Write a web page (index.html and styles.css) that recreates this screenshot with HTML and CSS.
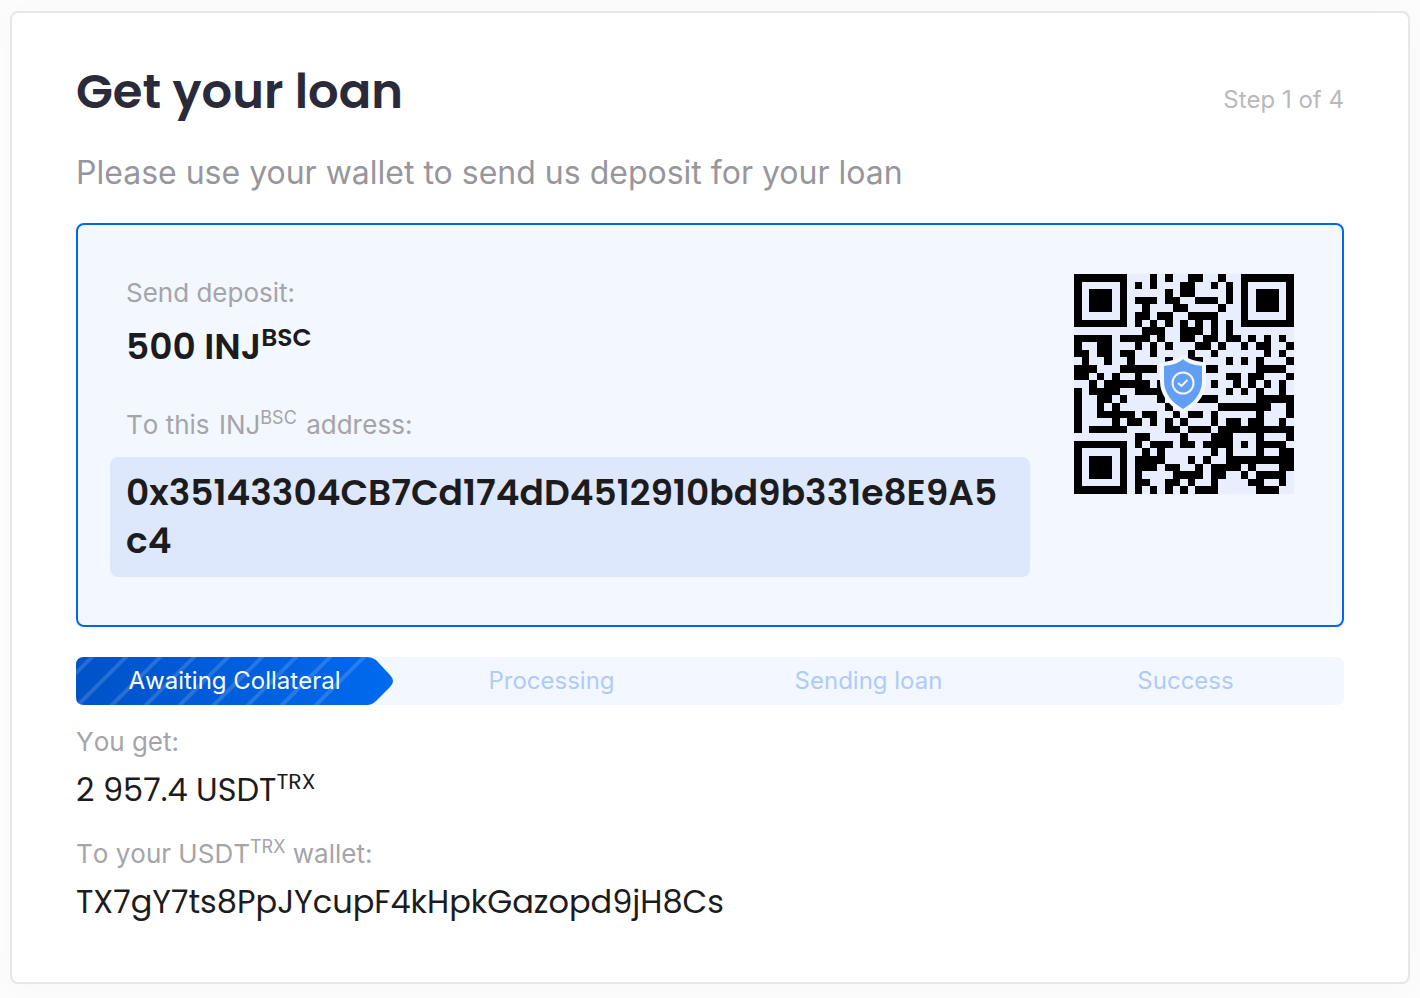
FILE: index.html
```html
<!DOCTYPE html>
<html lang="en">
<head>
    <meta charset="UTF-8">
    <meta name="viewport" content="width=device-width, initial-scale=1.0">
    <title>Get your loan</title>
    <link rel="stylesheet" href="styles.css">
</head>
<body>

    <main class="card">
        <header class="card-header">
            <h1>Get your loan</h1>
            <span class="step">Step 1 of 4</span>
        </header>
        <p class="subtitle">Please use your wallet to send us deposit for your loan</p>

        <section class="deposit">
            <div class="deposit-info">
                <p class="label">Send deposit:</p>
                <p class="amount">500 INJ<sup>BSC</sup></p>
                <p class="label">To this <span class="coin">INJ<sup>BSC</sup></span> address:</p>
                <p class="address">0x35143304CB7Cd174dD4512910bd9b331e8E9A5c4</p>
            </div>
            <div class="qr">
                <svg id="qr-code" class="qr-code" viewBox="0 0 29 29" shape-rendering="crispEdges" role="img" aria-label="Deposit address QR code"></svg>
                <svg class="shield" viewBox="0 0 48 60">
                    <path d="M24 5C29 10 36 11 43 12V27C43 40 34 49 24 55C14 49 5 40 5 27V12C12 11 19 10 24 5Z" fill="#629ff4" stroke="#f3f7ff" stroke-width="8" stroke-linejoin="round" paint-order="stroke"/>
                    <circle cx="24" cy="29" r="10.5" fill="none" stroke="#f3f7ff" stroke-width="2"/>
                    <path d="M19 29L22.500 32L28.500 26" fill="none" stroke="#f3f7ff" stroke-width="2"/>
                </svg>
            </div>
        </section>

        <ol class="progress">
            <li class="active">
                <svg class="arrow" viewBox="0 0 317 48" preserveAspectRatio="none">
                    <defs>
                        <linearGradient id="arrow-fill" x1="0" y1="0" x2="1" y2="0">
                            <stop offset="0" stop-color="#0052c7"/>
                            <stop offset="1" stop-color="#006af0"/>
                        </linearGradient>
                        <clipPath id="arrow-clip">
                            <path d="M8 0H291Q296 0 300 3L314 18Q320 24 314 30L300 44Q296 48 291 48H8Q0 48 0 40V8Q0 0 8 0Z"/>
                        </clipPath>
                    </defs>
                    <g clip-path="url(#arrow-clip)">
                        <rect width="317" height="48" fill="url(#arrow-fill)"/>
                        <path d="M-32 48L16 0M2 48L50 0M36 48L84 0M70 48L118 0M104 48L152 0M138 48L186 0M172 48L220 0M206 48L254 0M240 48L288 0" stroke="#fff" stroke-opacity=".15" stroke-width="4" stroke-linecap="square"/>
                    </g>
                </svg>
                <span>Awaiting Collateral</span>
            </li>
            <li>Processing</li>
            <li>Sending loan</li>
            <li>Success</li>
        </ol>

        <section class="payout">
            <p class="label">You get:</p>
            <p class="value">2 957.4 USDT<sup>TRX</sup></p>
            <p class="label">To your USDT<sup>TRX</sup> wallet:</p>
            <p class="value">TX7gY7ts8PpJYcupF4kHpkGazopd9jH8Cs</p>
        </section>
    </main>

    <script>
        const rows = [
            "#######...#.#..##..#..#######",
            "#.....#.#.#...##..#.#.#.....#",
            "#.###.#.....#.##....#.#.###.#",
            "#.###.#.###.##..###.#.#.###.#",
            "#.###.#..#...##....#..#.###.#",
            "#.....#.##.##..####...#.....#",
            "#######.#.#.#.#.#.#.#.#######",
            ".........###..###.#.#........",
            "#####.####.#..##.##.##.#.#.#.",
            "#..##...#.#.#...##.#..#.##..#",
            "##.##.##..#....#..#......#.#.",
            ".#..#..#....#..##...#.#.#...#",
            "###...#####......##.....####.",
            "##.#.#..#...........##.##...#",
            "..#.######.#......#..#.#.#.#.",
            "#.####..####........#.#.#..#.",
            "#..##.#....#....###.....#####",
            "#..#.#......#......#######..#",
            "#..#####.##..#.##.#.....#...#",
            "#....#.##.#.#.#...#.##.##..#.",
            "#.#####.....##.###.##########",
            "........##....#...###...#...#",
            "#######.#.###.##.####.#.####.",
            "#.....#..#.#......#.#...#..##",
            "#.###.#.####...#.#..#########",
            "#.###.#.###.##..#.####.#...##",
            "#.###.#.#....####.##..#.####.",
            "#.....#.##..##.#..#....##..#.",
            "#######.#.#.#.#.###.....###.."
        ];
        let d = "";
        rows.forEach((row, y) => {
            [...row].forEach((cell, x) => {
                if (cell === "#") {
                    d += `M${x} ${y}h1v1h-1z`;
                }
            });
        });
        const path = document.createElementNS("http://www.w3.org/2000/svg", "path");
        path.setAttribute("d", d);
        document.getElementById("qr-code").appendChild(path);
    </script>
</body>
</html>
```
FILE: styles.css
```css
* {
    box-sizing: border-box;
}
body {
    margin: 0;
    padding: 11px 10px 14px;
    background: #fcfcfc;
    font-family: Inter, "Liberation Sans", sans-serif;
    color: #1c1c1e;
}
h1, p, ol {
    margin: 0;
}
sup {
    line-height: 0;
}
.card {
    padding: 47px 64px 36px;
    background: #fff;
    border: 2px solid #e7e7e7;
    border-radius: 8px;
    box-shadow: 0 4px 40px rgba(0, 0, 0, 0.02);
}
.card-header {
    display: flex;
    justify-content: space-between;
    align-items: baseline;
}
h1 {
    font-family: Poppins, Inter, sans-serif;
    font-size: 48px;
    font-weight: 600;
    line-height: 64px;
    color: #2b2a3a;
}
.step {
    font-size: 24px;
    font-kerning: none;
    color: #b9b9bd;
}
.subtitle {
    margin-top: 25px;
    font-size: 32px;
    line-height: 48px;
    color: #97969c;
}
.deposit {
    display: flex;
    justify-content: space-between;
    margin-top: 26px;
    padding: 48px 48px 48px 32px;
    background: #f3f7ff;
    border: 2px solid #0067ee;
    border-radius: 8px;
}
.deposit-info {
    width: 920px;
}
.label {
    font-size: 26px;
    font-kerning: none;
    line-height: 40px;
    color: #a5a4a9;
}
.label sup {
    font-size: 18px;
}
.deposit .label,
.amount {
    padding-left: 16px;
}
.amount {
    margin-bottom: 24px;
    font-family: Poppins, Inter, sans-serif;
    font-size: 36px;
    font-weight: 600;
    line-height: 68px;
}
.amount sup {
    font-size: 25px;
}
.coin {
    margin: 0 2px;
}
.address {
    margin-top: 12px;
    padding: 12px 16px;
    background: #dee8fc;
    border-radius: 8px;
    font-family: Poppins, Inter, sans-serif;
    font-size: 36px;
    font-weight: 600;
    line-height: 48px;
    word-break: break-all;
}
.qr {
    position: relative;
    width: 220px;
    height: 220px;
    margin-top: 1px;
    background: #e9eeff;
}
.qr-code {
    display: block;
    width: 100%;
    height: 100%;
}
.shield {
    position: absolute;
    top: 80px;
    left: 85px;
    width: 48px;
    height: 60px;
}
.progress {
    display: grid;
    grid-template-columns: repeat(4, 1fr);
    margin-top: 30px;
    padding: 0;
    list-style: none;
    background: #f3f7ff;
    border-radius: 8px;
}
.progress li {
    position: relative;
    font-size: 24px;
    line-height: 48px;
    text-align: center;
    color: #b0cbf8;
}
.progress .active {
    font-kerning: none;
    color: #fff;
}
.active span {
    position: relative;
}
.arrow {
    position: absolute;
    inset: 0;
    width: 100%;
    height: 100%;
}
.payout {
    padding-top: 17px;
}
.value {
    margin-bottom: 16px;
    font-family: Poppins, Inter, sans-serif;
    font-size: 32px;
    line-height: 56px;
}
.value sup {
    font-size: 22px;
}
```
